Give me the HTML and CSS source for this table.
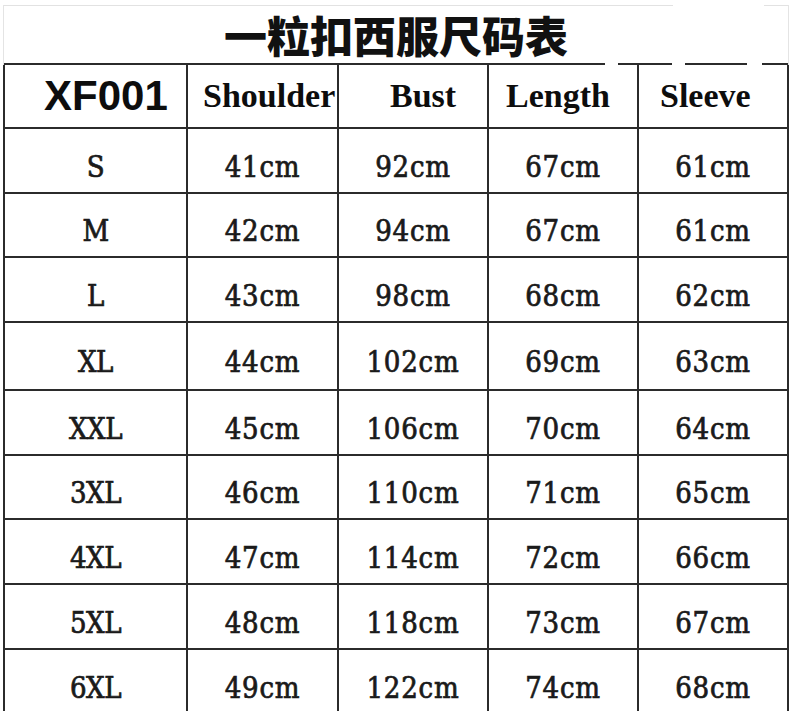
FILE: index.html
```html
<!DOCTYPE html>
<html lang="zh">
<head>
<meta charset="utf-8">
<title>一粒扣西服尺码表</title>
<link rel="stylesheet" href="styles.css">
</head>
<body>
<div class="chart">
  <div class="title">一粒扣西服尺码表</div>
  <div class="grid">
    <div class="cell head code">XF001</div>
    <div class="cell head c1">Shoulder</div>
    <div class="cell head c2">Bust</div>
    <div class="cell head c3">Length</div>
    <div class="cell head c4">Sleeve</div>

    <div class="cell size">S</div><div class="cell">41cm</div><div class="cell">92cm</div><div class="cell">67cm</div><div class="cell">61cm</div>
    <div class="cell size">M</div><div class="cell">42cm</div><div class="cell">94cm</div><div class="cell">67cm</div><div class="cell">61cm</div>
    <div class="cell size">L</div><div class="cell">43cm</div><div class="cell">98cm</div><div class="cell">68cm</div><div class="cell">62cm</div>
    <div class="cell size">XL</div><div class="cell">44cm</div><div class="cell">102cm</div><div class="cell">69cm</div><div class="cell">63cm</div>
    <div class="cell size">XXL</div><div class="cell">45cm</div><div class="cell">106cm</div><div class="cell">70cm</div><div class="cell">64cm</div>
    <div class="cell size">3XL</div><div class="cell">46cm</div><div class="cell">110cm</div><div class="cell">71cm</div><div class="cell">65cm</div>
    <div class="cell size">4XL</div><div class="cell">47cm</div><div class="cell">114cm</div><div class="cell">72cm</div><div class="cell">66cm</div>
    <div class="cell size">5XL</div><div class="cell">48cm</div><div class="cell">118cm</div><div class="cell">73cm</div><div class="cell">67cm</div>
    <div class="cell size">6XL</div><div class="cell">49cm</div><div class="cell">122cm</div><div class="cell">74cm</div><div class="cell">68cm</div>
  </div>
</div>
</body>
</html>
```

FILE: styles.css
```css
html, body {
  margin: 0;
  padding: 0;
  background: #ffffff;
  overflow: hidden;
}

.chart {
  padding: 5px 0 0 3px;
  width: 786px;
}

.title {
  box-sizing: border-box;
  width: 786px;
  height: 60px;
  padding-top: 1px;
  border-left: 1px solid #e4e4e4;
  border-right: 1px solid #e4e4e4;
  background-image:
    linear-gradient(to right, #e2e2e2 0 669px, transparent 669px 760px, #e2e2e2 760px),
    linear-gradient(to right, #2b2b2b 0 601px, transparent 601px 614px, #2b2b2b 614px 668px, transparent 668px 681px, #2b2b2b 681px 743px, transparent 743px 758px, #2b2b2b 758px);
  background-size: 100% 1px, 100% 2px;
  background-position: top left, bottom left;
  background-repeat: no-repeat;
  font-family: "Noto Sans CJK SC", "Noto Sans", sans-serif;
  font-weight: 900;
  font-size: 43px;
  line-height: 56px;
  text-align: center;
  color: #111111;
}

.grid {
  display: grid;
  grid-template-columns: 181px 149px 148px 148px 148px;
  grid-template-rows: 62px 63px 62px 63px 66px 63px 62px 63px 63px 63px;
  gap: 2px;
  padding: 0 2px 2px 2px;
  background: #2b2b2b;
  width: 782px;
}

.cell {
  background: #ffffff;
  display: flex;
  align-items: center;
  justify-content: center;
  box-sizing: border-box;
  padding-top: 12px;
  font-family: "DejaVu Serif", "Liberation Serif", serif;
  font-stretch: condensed;
  font-weight: normal;
  font-size: 29px;
  letter-spacing: 0.8px;
  -webkit-text-stroke: 0.7px #1a1a1a;
  color: #1a1a1a;
  white-space: nowrap;
}

.size {
  letter-spacing: -0.5px;
}

.head {
  padding-top: 0;
  letter-spacing: 0;
  -webkit-text-stroke: 0;
  font-family: "Liberation Serif", "Times New Roman", serif;
  font-stretch: normal;
  font-weight: bold;
  font-size: 34px;
  color: #0d0d0d;
  justify-content: flex-start;
}

.code {
  font-family: "Liberation Sans", Arial, sans-serif;
  font-size: 42px;
  padding-left: 39px;
}

.c1 { padding-left: 15px; }
.c2 { padding-left: 51px; }
.c3 { padding-left: 17px; }
.c4 { padding-left: 21px; }
```
